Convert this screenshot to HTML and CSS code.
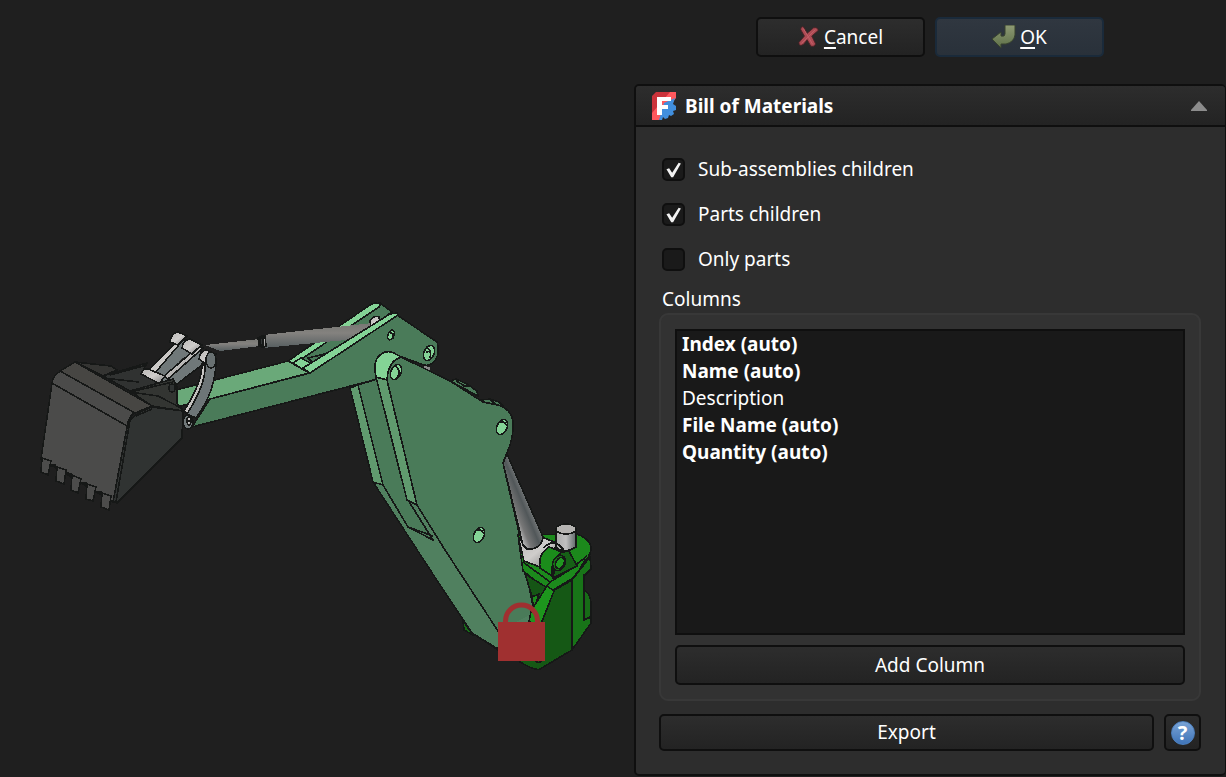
FILE: index.html
```html
<!DOCTYPE html>
<html lang="en">
<head>
<meta charset="utf-8">
<title>Bill of Materials</title>
<link rel="stylesheet" href="styles.css">
</head>
<body>
<div class="app">
  <main class="viewport">
    <svg class="model" viewBox="0 0 634 777" role="img" aria-label="Excavator arm assembly">
      <defs>
        <linearGradient id="rod" x1="0" y1="0" x2="0" y2="1"><stop offset="0" stop-color="#777773"/><stop offset=".4" stop-color="#84827f"/><stop offset="1" stop-color="#565e60"/></linearGradient>
        <linearGradient id="ram" gradientUnits="userSpaceOnUse" x1="509" y1="508" x2="533" y2="498"><stop offset="0" stop-color="#b0b0b0"/><stop offset=".2" stop-color="#777"/><stop offset=".55" stop-color="#515759"/><stop offset="1" stop-color="#999"/></linearGradient>
        <linearGradient id="pin" x1="0" x2="1"><stop offset="0" stop-color="#ababab"/><stop offset=".5" stop-color="#c0c0c0"/><stop offset="1" stop-color="#606769"/></linearGradient>
        <linearGradient id="steel" x1="0" y1="0" x2="1" y2="1"><stop offset="0" stop-color="#b9b7b5"/><stop offset=".5" stop-color="#cfcdcb"/><stop offset="1" stop-color="#777"/></linearGradient>
      </defs>
      <g class="solid">
        <!-- boom -->
        <path class="g-dark" d="M288 361 372 304 380 303 392 312 308 371Z"/>
        <path class="g-pale" d="M288 361 370 305 375 303 381 304 379 307 294 364Z"/>
        <path class="g-dark" d="M308 358 337 351 331 354 313 363Z"/>
        <path class="g-pale" d="M293 363 301 358 314 365 308 373Z"/>
        <path class="g-mid" d="M176 390 288 361 309 373 210 399 176 407Z"/>
        <path fill="url(#rod)" stroke="none" d="M205 345 260 339 260 346 220 351Z"/>
        <path fill="url(#rod)" stroke="none" d="M263 335 373 323 378 326 346 340 263 348Z"/>
        <path class="steel" d="M258 338q4-3 7-2l1 10q-3 2-7 0Z"/>
        <path fill="#343839" d="M260 338h3v7h-3Z"/>
        <path class="steel" d="M370 321q3-6 9-4l1 5-9 6Z"/>
        <path class="g-dark" d="M210 399 310 373 397 315 437 342Q440 352 436 359 431 367 424 365L402 357 374 380 192 427Z"/>
        <path class="g-pale" d="M303 368 390 314 397 313 398 315 395 317 310 373Z"/>
        <ellipse class="g-pale" cx="429" cy="353" rx="5" ry="8" transform="rotate(24 429 353)"/>
        <path class="line" d="M426 347q6 3 4 11M426 352l5-1"/>
        <ellipse class="g-pale" cx="391" cy="335" rx="3" ry="5" transform="rotate(20 391 335)"/>
        <path class="line" d="M389 332l4 2v5"/>
        <!-- stick -->
        <path class="g-dark" d="M450 381 456 379 467 384 477 391 478 396ZM482 400 490 399 499 402 503 406 486 403Z"/>
        <path class="line" d="M456 381l9 5M463 386h7M490 400l6 4"/>
        <path fill="#898989" stroke="none" d="M424 366l6 1v5l-5-2Z"/>
        <path class="g-dark" d="M350 388 376 379 387 380 440 585 472 633 440 585 373 482Z"/>
        <path class="g-low" d="M373 482 383 485 417 505 500 630 498 650 472 633 440 585Z"/>
        <path class="g-dark" d="M358 385 377 379 408 500 433 540 408 527 383 485Z"/>
        <path class="g-strip" d="M350 388 358 385 383 485 373 482Z"/>
        <path class="g-dark" d="M387 380Q386 363 401 357L450 381 483 402 498 405Q511 409 513 421 514 432 510 445L503 463 520 537 533 607 530 650 498 631 445 550 417 505Z"/>
        <path class="g-strip" d="M376 377 387 380 417 505 407 500Z"/>
        <path class="g-pale" d="M376 377Q373 363 378 357 385 349 394 353L401 357Q388 361 387 380Z"/>
        <path class="g-low" d="M498 631 536 612 533 657 498 650Z" stroke="none"/>
        <path class="line" d="M408 500 433 540M408 527 433 536M417 505 445 550 498 631M373 482 440 585 472 633 498 649"/>
        <g transform="rotate(25 396 372)"><ellipse class="g-pale" cx="396" cy="372" rx="5" ry="8"/><path class="line" d="M393 367q8 1 6 11"/></g>
        <g transform="rotate(25 502 427)"><ellipse class="g-pale" cx="502" cy="427" rx="5" ry="8"/><path class="line" d="M498 424q4-4 8 0"/></g>
        <g transform="rotate(25 479 535)"><ellipse class="g-pale" cx="479" cy="535" rx="5" ry="8"/><path class="line" d="M475 532q4-4 8 0"/></g>
        <!-- slewing base -->
        <path fill="#176c17" d="M584 590q7 4 7 14v16l-7 4ZM463 621l10 14-9-5Z"/>
        <path fill="#187418" d="M572 580 590 557 591 569 584 576V620L590 617 591 623 572 650Z"/>
        <path class="line" d="M584 574v46"/>
        <path fill="#1c891c" d="M518 535 577 534Q592 540 591 550L587 560 573 578 550 592 523 571Z"/>
        <path class="line" d="M591 550q-1 8-6 10l-7 12M523 562 550 582 568 571 587 556M546 587l4-5"/>
        <path fill="#155515" d="M525 574 546 587 539 600 532 596Z"/>
        <path fill="#1c8c1c" d="M532 597 539 594 534 610Z"/>
        <path fill="#155815" d="M553 591 572 580V650L540 669Q535 671 520 662L533 625Z"/>
        <path fill="#1d961d" d="M547 586 554 591 541 624 529 622 531 611Z"/>
        <path class="steel" d="M518 536 526 548 544 538 557 543 548 565 540 567 524 561Z"/>
        <path fill="url(#ram)" d="M507 454 543 537Q541 550 527 549L523 545 503 463Z"/>
        <path fill="url(#pin)" d="M556 529 556 547Q560 552 570 550L576 547V529Z"/>
        <ellipse fill="#b6b4b2" cx="566" cy="529" rx="10" ry="5"/>
        <path class="line" d="M544 548q6-8 15-3l5 5"/>
        <path fill="#166016" d="M553 578 557 553 569 551 577 566Z"/>
        <path fill="#1b8c1b" d="M540 568Q538 554 549 547L562 552Q550 560 552 576Z"/>
        <ellipse fill="#177017" cx="559" cy="563" rx="6" ry="8" transform="rotate(25 559 563)"/>
        <ellipse fill="#209520" cx="560" cy="563" rx="4" ry="6" transform="rotate(25 560 563)"/>
        <path class="line" d="M534 660q5 5 8 0"/>
        <!-- bucket linkage -->
        <path fill="#707879" d="M151 373 182 338 211 358 177 384 160 383Z"/>
        <path fill="#303333" stroke="none" d="M168 375 184 356 179 368Z"/>
        <path class="steel" d="M148 371 178 340 184 339 154 374ZM164 376 198 347 203 348 168 379Z"/>
        <path class="steel" d="M170 342Q171 333 178 332L187 336Q181 341 178 345Z"/>
        <path class="steel" d="M182 348Q183 340 190 339L202 345 197 349 192 354Z"/>
        <path class="steel" d="M141 374Q142 368 148 369L165 376 159 384 147 381Z"/>
        <path fill="#6d7577" d="M205 360 216 360Q216 391 196 418L187 414Q206 383 205 360Z"/>
        <path class="steel" d="M202 364 205 366Q206 384 187 414L184 411Q202 383 202 364Z"/>
        <path class="steel" d="M199 359Q200 351 206 350L216 354 210 367Z"/>
        <ellipse fill="#687071" cx="211" cy="360" rx="5" ry="8"/>
        <!-- bucket -->
        <path fill="#343432" d="M75 362 111 366 117 370 103 376Z"/>
        <path fill="#303231" d="M103 376 147 363 141 374 160 384 130 391Z"/>
        <path class="line" d="M103 378 139 382M110 375 147 365"/>
        <path fill="#333532" d="M130 391 173 379 177 387V403L183 411 152 406Z"/>
        <path class="line" d="M130 392 173 382M130 392 158 396 183 409"/>
        <ellipse fill="#303333" cx="172" cy="388" rx="3" ry="4"/>
        <path fill="#303332" d="M127 427Q128 416 152 407L183 411 182 438 117 503 113 501Z"/>
        <path fill="#4b4b4a" d="M41 459 52 383Q53 375 61 371L135 412Q128 417 127 427L113 502Z"/>
        <path fill="#474643" d="M60 371 75 362 152 406 135 413Z"/>
        <path class="line" d="M52 383 127 426M133 414q-3 4-4 12L116 502M152 409l-16 7M152 406l31 5"/>
        <g fill="#4c4c4b">
          <path d="M42 458 51 461 48 475 41 472Z"/><path d="M57 467 66 470 64 484 56 481Z"/><path d="M72 475 81 479 78 493 71 490Z"/><path d="M87 484 96 487 93 501 86 499Z"/><path d="M102 493 111 496 109 510 101 507Z"/>
        </g>
        <g class="gap"><path d="M51 465l5 1M66 473l6 2M82 483l5 1M97 492l5 1"/></g>
        <ellipse fill="#707879" cx="188" cy="422" rx="5" ry="7"/>
        <ellipse class="steel" cx="189" cy="421" rx="2" ry="4"/>
        <path class="line" d="M187 421h4"/>
        <!-- grounded joint marker -->
        <path class="shackle" d="M505.500 622v-1a16 16 0 0 1 32 0v1"/>
        <path class="lock" d="M498 622h47v39h-47Z"/>
      </g>
    </svg>
  </main>
  <aside class="tasks">
    <div class="actions">
      <button class="btn" type="button">
        <svg class="ico" viewBox="0 0 24 24" aria-hidden="true"><path d="M6 1 10 8 17 2Q22 1 22 5L15 11 19 19Q19 23 14 22L10 15 6 20Q1 23 1 18L7 11 3 4Q3 0 6 1Z" fill="#ad4b54" stroke="#4b2226"/><path d="M6 3l10 17M19 4 4 19" stroke="#c4606a" fill="none"/></svg>
        <span><u>C</u>ancel</span>
      </button>
      <button class="btn btn-default" type="button">
        <svg class="ico ico-wide" viewBox="0 0 24 24" aria-hidden="true"><defs><linearGradient id="ret" x1="0" y1="0" x2="0" y2="1"><stop offset="0" stop-color="#8f9a74"/><stop offset="1" stop-color="#5d7048"/></linearGradient></defs><path d="M13 0H23V10Q22 17 14 19H9V23L0 14 9 7V11Q13 12 13 9Z" fill="url(#ret)" stroke="#38432e"/></svg>
        <span><u>O</u>K</span>
      </button>
    </div>
    <section class="panel">
      <header class="panel-head">
        <svg class="logo" viewBox="0 0 24 28" aria-hidden="true"><path d="M4 0H20L0 24V4Z" fill="#cb333b"/><path d="M18 0h6v6L7 28H0v-7Z" fill="#ff585d"/><path d="M23 6 21 12l3 2v4l-3 1 1 3-3 2-2-1-1 3-3 1-2-2-1 3H7L12 11Z" fill="#418fde"/><path d="M5 5H19V9H10V13H16V17H10V23H5Z" fill="#fff"/></svg>
        <h1 class="panel-title">Bill of Materials</h1>
        <button class="collapse" type="button" aria-label="Collapse"><svg viewBox="0 0 16 10" aria-hidden="true"><path d="M8 0 16 9V10H0V9Z" fill="#8c8c8c"/></svg></button>
      </header>
      <div class="panel-body">
        <div class="checks">
          <label class="check"><input type="checkbox" checked><span>Sub-assemblies children</span></label>
          <label class="check"><input type="checkbox" checked><span>Parts children</span></label>
          <label class="check"><input type="checkbox"><span>Only parts</span></label>
        </div>
        <h2 class="group-title" id="columns-title">Columns</h2>
        <div class="group">
          <ul class="list" aria-labelledby="columns-title">
            <li class="auto">Index (auto)</li>
            <li class="auto">Name (auto)</li>
            <li>Description</li>
            <li class="auto">File Name (auto)</li>
            <li class="auto">Quantity (auto)</li>
          </ul>
          <button class="btn" type="button">Add Column</button>
        </div>
        <div class="footer">
          <button class="btn export" type="button">Export</button>
          <button class="btn help" type="button" aria-label="Help"><span class="help-mark">?</span></button>
        </div>
      </div>
    </section>
  </aside>
</div>
</body>
</html>
```
FILE: styles.css
```css
* { box-sizing: border-box; }

body {
  margin: 0;
  background: #1f1f1f;
  color: #fff;
  font: 19px/27px "Noto Sans", sans-serif;
}

.app {
  display: grid;
  grid-template-columns: minmax(0, 634fr) minmax(0, 592fr);
  min-height: 100vh;
}

.model { display: block; width: 100%; }

.solid { stroke: #161817; stroke-width: 1.6; stroke-linejoin: round; shape-rendering: crispEdges; }
.g-dark { fill: #4a7b59; }
.g-low { fill: #50805f; }
.g-mid { fill: #6aa979; }
.g-strip { fill: #609a6e; }
.g-pale { fill: #84d396; }
.steel { fill: url(#steel); }
.line { fill: none; }
.gap { fill: none; stroke-width: 3; }
.lock { fill: #a03030; stroke: none; }
.shackle { fill: none; stroke: #a03030; stroke-width: 5; shape-rendering: auto; }

.tasks {
  display: flex;
  flex-direction: column;
  gap: 27px;
  padding: 17px 0 1px;
}

.actions { display: flex; justify-content: center; gap: 10px; }
.actions .btn { width: 169px; }

.btn {
  display: flex;
  align-items: center;
  justify-content: center;
  gap: 4px;
  height: 40px;
  padding: 0 8px;
  border: 2px solid #0f0f0f;
  border-radius: 5px;
  background: linear-gradient(#2d2d2d, #232323);
  color: #fff;
  font: inherit;
}

.btn-default {
  border-color: #1a2a3a;
  background: linear-gradient(#303740, #29313a);
}

.btn u { text-decoration-thickness: 2px; text-underline-offset: 3px; text-decoration-skip-ink: none; }
.ico { width: 22px; height: 24px; }
.ico-wide { width: 24px; }

.panel {
  display: flex;
  flex: 1;
  flex-direction: column;
  border: 2px solid #0f0f0f;
  border-right-width: 1px;
  border-radius: 5px;
  background: #2d2d2d;
}

.panel-head {
  display: flex;
  align-items: center;
  gap: 9px;
  height: 41px;
  padding: 0 18px 0 16px;
  border-bottom: 2px solid #0f0f0f;
  border-radius: 4px 4px 0 0;
  background: linear-gradient(#2d2d2d, #232323);
}

.logo { width: 24px; height: 28px; }
.panel-title { flex: 1; margin: 0; padding-top: 1px; font-size: 19px; }

.collapse { display: flex; padding: 0; border: 0; background: none; }
.collapse svg { width: 16px; height: 10px; }

.panel-body {
  display: flex;
  flex: 1;
  flex-direction: column;
  padding: 29px 24px 23px 23px;
}

.checks { display: flex; flex-direction: column; gap: 18px; padding-left: 3px; }
.check { display: flex; align-items: center; gap: 13px; }

.check input {
  appearance: none;
  width: 23px;
  height: 23px;
  margin: 0;
  border: 2px solid #0f0f0f;
  border-radius: 5px;
  background: #1a1a1a;
}

.check input:checked::after {
  content: "";
  display: block;
  width: 100%;
  height: 100%;
  background: #f2f2f2;
  clip-path: polygon(13% 49%, 27% 43%, 43% 67%, 77% 14%, 89% 19%, 48% 91%, 38% 91%);
}

.group-title { margin: 13px 3px 0; font-size: 19px; font-weight: 400; }

.group {
  display: flex;
  flex: 1;
  flex-direction: column;
  gap: 10px;
  padding: 14px;
  border: 2px solid #383838;
  border-radius: 9px;
  background: #323232;
}

.list {
  flex: 1;
  margin: 0;
  padding: 0 5px;
  border: 2px solid #0f0f0f;
  background: #191919;
  list-style: none;
}

.list .auto { font-weight: 700; }

.footer { display: flex; gap: 10px; margin-top: 13px; }
.footer .btn { height: 37px; }
.export { flex: 1; }
.help { width: 37px; padding: 0; }

.help-mark {
  width: 24px;
  height: 24px;
  border: 1px solid #4c7fbd;
  border-radius: 50%;
  background: linear-gradient(#79a3d6, #3f74b8);
  font-size: 20px;
  font-weight: 700;
  line-height: 22px;
}
```
